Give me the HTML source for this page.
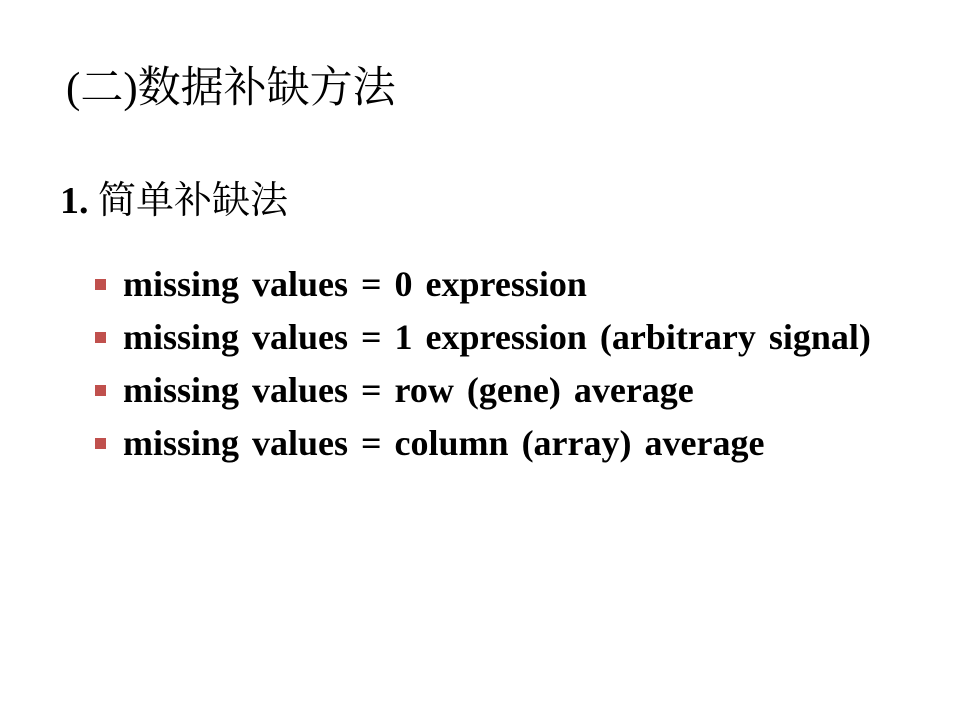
<!DOCTYPE html>
<html><head><meta charset="utf-8"><style>
body{margin:0;width:960px;height:720px;background:#fff;position:relative;overflow:hidden;font-family:"Liberation Serif","Noto Serif CJK SC",serif;color:#000}
.t{position:absolute;left:66px;top:61px;font-size:43px;line-height:56px;white-space:nowrap}
.h{position:absolute;left:60px;top:181px;font-size:38px;line-height:40px;white-space:nowrap}
.h b{font-weight:bold}
.li{position:absolute;left:123px;font-size:36px;font-weight:bold;line-height:36px;white-space:nowrap;word-spacing:4px}
.sq{position:absolute;left:95px;width:11px;height:11px;background:#c0504d}
</style></head><body>
<div class="t">(二)数据补缺方法</div>
<div class="h"><b>1.</b> 简单补缺法</div>
<div class="sq" style="top:279px"></div><div class="li" style="top:266px">missing values = 0 expression</div>
<div class="sq" style="top:332px"></div><div class="li" style="top:319px">missing values = 1 expression (arbitrary signal)</div>
<div class="sq" style="top:385px"></div><div class="li" style="top:372px">missing values = row (gene) average</div>
<div class="sq" style="top:438px"></div><div class="li" style="top:425px">missing values = column (array) average</div>
</body></html>
